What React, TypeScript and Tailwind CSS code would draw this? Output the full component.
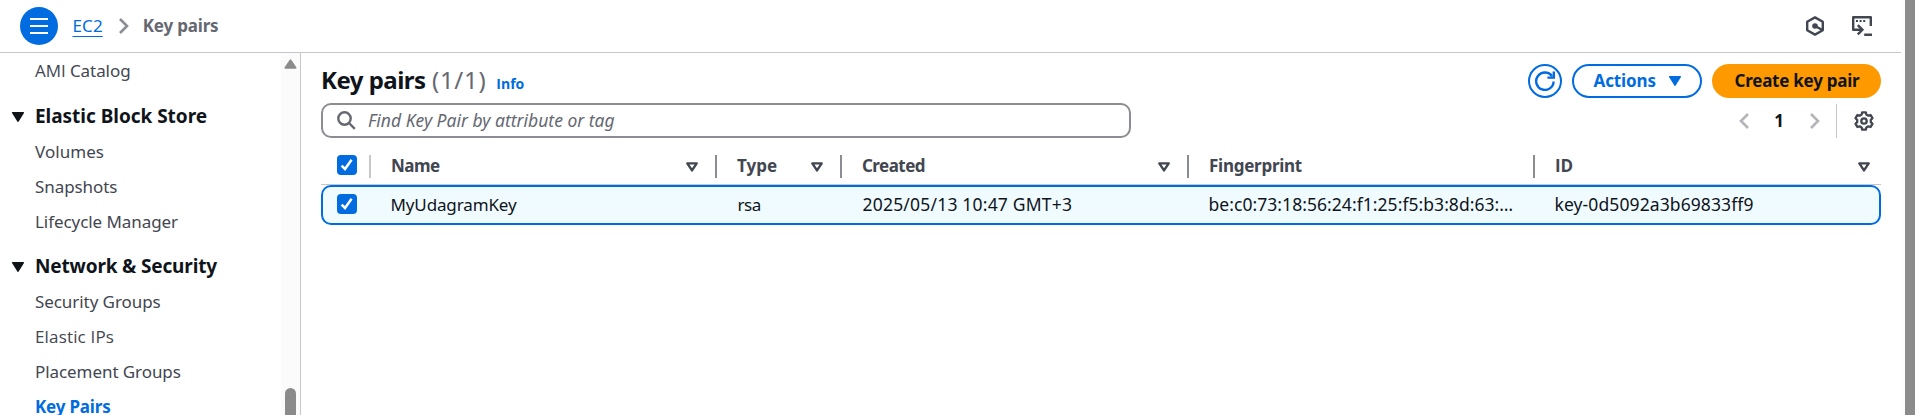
import type { ReactNode } from "react";

function Caret({ className = "" }: { className?: string }) {
  return (
    <svg className={`shrink-0 ${className}`} width="14" height="12" viewBox="0 0 14 12">
      <path d="M1.7 1.7h10.6L7 10.2z" fill="currentColor" stroke="currentColor" strokeWidth="1.6" strokeLinejoin="round" />
    </svg>
  );
}

function SortIcon() {
  return (
    <svg className="shrink-0" width="14" height="12" viewBox="0 0 14 12">
      <path d="M2.3 2.4h9.4L7 9.4z" fill="none" stroke="#424650" strokeWidth="2.4" strokeLinejoin="round" />
    </svg>
  );
}

function Chevron({ className, flip = false }: { className: string; flip?: boolean }) {
  return (
    <svg className={className} width="12" height="18" viewBox="0 0 12 18" fill="none" stroke="currentColor" strokeWidth="2.6">
      <path d={flip ? "M10 2 3 9l7 7" : "M2 2l7 7-7 7"} />
    </svg>
  );
}

function Checkbox() {
  return (
    <span className="flex size-5 shrink-0 items-center justify-center rounded-[4px] bg-[#006ce0]">
      <svg width="14" height="14" viewBox="0 0 14 14" fill="none" stroke="#fff" strokeWidth="2.5">
        <path d="M1.6 7.6 5 11l6.6-9.2" />
      </svg>
    </span>
  );
}

function Section({ children }: { children: ReactNode }) {
  return (
    <div className="flex h-[25px] items-center text-[19px] leading-[25px] font-bold text-[#0f141a]">
      <Caret className="mr-[10px]" />
      <span className="whitespace-nowrap">{children}</span>
    </div>
  );
}

function Item({ children, className = "tracking-[-0.07px]" }: { children: ReactNode; className?: string }) {
  return <div className={`ml-6 h-[25px] leading-[25px] whitespace-nowrap ${className}`}>{children}</div>;
}

function Sidebar() {
  return (
    <aside className="flex w-[301px] shrink-0 border-r border-[#c6c6cd]">
      <nav className="flex w-[281px] flex-col gap-[10px] pt-[5px] pl-[11px] text-[#424650]">
        <Item><span className="font-['Open_Sans',sans-serif]">AMI</span> Catalog</Item>
        <div className="mt-[11px]"><Section><span className="tracking-[-0.03px]">Elastic Block Store</span></Section></div>
        <Item className="tracking-[0.05px]">Volumes</Item>
        <Item>Snapshots</Item>
        <Item>Lifecycle Manager</Item>
        <div className="mt-[10px]"><Section><span className="tracking-[-0.16px]">Network &amp; Security</span></Section></div>
        <Item>Security Groups</Item>
        <Item className="font-['Open_Sans',sans-serif] tracking-[0.16px]">Elastic IPs</Item>
        <Item>Placement Groups</Item>
        <Item className="font-bold tracking-[-0.19px] text-[#006ce0]">Key Pairs</Item>
      </nav>
      <div className="flex w-[19px] flex-col items-center justify-between bg-[#fbfbfb] pt-[6px]">
        <svg width="13" height="10" viewBox="0 0 13 10">
          <path d="M6.5 1.2 11.6 8.8H1.4z" fill="#8b8b8b" stroke="#8b8b8b" strokeWidth="1.8" strokeLinejoin="round" />
        </svg>
        <div className="h-[27px] w-[11px] rounded-t-full bg-[#8b8b8b]" />
      </div>
    </aside>
  );
}

function TopBar() {
  return (
    <header className="flex h-[53px] shrink-0 items-center border-b border-[#c6c6cd] pl-5">
      <button className="flex size-[38px] items-center justify-center rounded-full bg-[#006ce0]">
        <svg width="18" height="16" viewBox="0 0 18 16" stroke="#fff" strokeWidth="2">
          <path d="M0 1h18M0 8h18M0 15h18" />
        </svg>
      </button>
      <a className="-mt-px ml-[14.5px] tracking-[0.1px] text-[#006ce0] underline decoration-1 underline-offset-[4px]">EC2</a>
      <Chevron className="ml-[15px] text-[#8c8c94]" />
      <span className="-mt-px ml-[13px] font-bold tracking-[-0.19px] text-[#656871]">Key pairs</span>
      <div className="mr-[29px] ml-auto flex gap-[27px] text-[#424650]">
        <svg width="20" height="20" viewBox="0 0 20 20" fill="none" stroke="currentColor" strokeWidth="2.4" strokeLinejoin="round">
          <path d="M10 1.4 17.8 5.7v8.6L10 18.6 2.2 14.3V5.7z" />
          <circle cx="10" cy="10" r="2.8" fill="currentColor" stroke="none" />
          <path d="M10 10l7 3.8" />
        </svg>
        <svg width="20" height="20" viewBox="0 0 20 20" fill="none" stroke="currentColor" strokeWidth="2.4">
          <path d="M18.8 10V1.2H1.2v12.6H10" strokeLinejoin="round" />
          <path d="M5.8 9.2l4.6 4.6-4.6 4.6M12.2 18.8H20" />
          <path d="M4 5h2M7.6 5h2M11.2 5h2" strokeWidth="2" />
        </svg>
      </div>
    </header>
  );
}

function HeadCell({ label, width, sort = true, labelClass = "" }: { label: string; width: string; sort?: boolean; labelClass?: string }) {
  return (
    <div className={`flex h-[23px] shrink-0 items-center justify-between border-l-2 border-[#8c8c94] pr-4 pl-5 ${width}`}>
      <span className={`-mt-[2px] ${labelClass}`}>{label}</span>
      {sort && <SortIcon />}
    </div>
  );
}

function Table() {
  return (
    <div className="mt-4 w-[1560px]">
      <div className="flex h-[31px] items-start border-b border-[#c6c6cd] pt-px pl-4 font-bold text-[#424650]">
        <Checkbox />
        <div className="ml-3 flex h-[23px] w-[346px] shrink-0 items-center justify-between border-l-2 border-[#c6c6cd] pr-[16px] pl-5">
          <span className="-mt-[2px] tracking-[-0.56px]">Name</span>
          <SortIcon />
        </div>
        <HeadCell label="Type" width="w-[125px]" />
        <HeadCell label="Created" width="w-[347px]" labelClass="tracking-[-0.54px]" />
        <HeadCell label="Fingerprint" width="w-[346px]" sort={false} labelClass="tracking-[-0.26px]" />
        <HeadCell label="ID" width="w-[354px]" labelClass="font-['Open_Sans',sans-serif] tracking-[-0.11px]" />
      </div>
      <div className="flex h-10 items-center rounded-[10px] border-2 border-[#006ce0] bg-[#f0fbff] pb-[2px] pl-[14px] text-[17.5px] whitespace-nowrap text-[#0f141a]">
        <Checkbox />
        <span className="ml-[33.5px] w-[347px] text-[17px] tracking-[-0.13px]">MyUdagramKey</span>
        <span className="w-[125px] text-[17px] tracking-[-0.4px]">rsa</span>
        <span className="w-[346px] tracking-[0.2px]">2025/05/13 10:47 GMT+3</span>
        <span className="w-[346px] tracking-[0.05px]">be:c0:73:18:56:24:f1:25:f5:b3:8d:63:…</span>
        <span className="tracking-[0.1px]">key-0d5092a3b69833ff9</span>
      </div>
    </div>
  );
}

function Main() {
  return (
    <main className="min-w-0 flex-1 pt-[11px] pl-5">
      <div className="flex h-[34px] w-[1560px] items-center">
        <div className="mt-px flex items-baseline text-[24px] leading-[32px]">
          <h1 className="font-bold tracking-[-0.52px] text-[#0f141a]">Key pairs</h1>
          <span className="ml-[6.5px] tracking-[0.7px] text-[#656871]">(1/1)</span>
          <a className="ml-[10px] font-['Open_Sans',sans-serif] text-[14px] font-bold text-[#006ce0]">Info</a>
        </div>
        <div className="ml-auto flex gap-[10px] font-bold">
          <button className="flex size-[34px] items-center justify-center rounded-full border-2 border-[#006ce0] text-[#006ce0]">
            <svg className="shrink-0" width="20" height="20" viewBox="0 0 20 20" fill="none" stroke="currentColor" strokeWidth="2.4">
              <path d="M18.6 10.4A8.7 8.7 0 1 1 17 5.2" />
              <path d="M18.8 0.4v6.2h-6.4" />
            </svg>
          </button>
          <button className="flex h-[34px] w-[130px] items-center rounded-full border-2 border-[#006ce0] pb-[2px] pl-[19.5px] text-[#006ce0]">
            <span className="tracking-[-0.1px]">Actions</span>
            <Caret className="mt-[2px] ml-[12px]" />
          </button>
          <button className="h-[34px] w-[169px] rounded-full bg-[#ff9900] pb-[2px] pl-px tracking-[-0.24px] text-[#0f141a]">Create key pair</button>
        </div>
      </div>
      <div className="mt-[5px] flex h-[35px] w-[1560px] items-center">
        <div className="flex h-[35px] w-[810px] items-center rounded-[10px] border-2 border-[#8c8c94] pl-[14px] text-[#656871]">
          <svg width="19" height="19" viewBox="0 0 19 19" fill="none" stroke="currentColor" strokeWidth="2.4">
            <circle cx="7.5" cy="7.5" r="6.2" />
            <path d="M12 12l5.8 5.8" />
          </svg>
          <span className="-mt-px ml-3 text-[17.5px] italic">Find Key Pair by attribute or tag</span>
        </div>
        <div className="ml-auto flex h-[34px] items-center">
          <Chevron flip className="text-[#b4b4bb]" />
          <span className="-mt-px ml-[24px] font-bold text-[#0f141a]">1</span>
          <Chevron className="ml-[25px] text-[#b4b4bb]" />
          <div className="ml-[15px] h-[34px] border-l border-[#c6c6cd]" />
          <svg className="mr-[7px] ml-[17px]" width="20" height="20" viewBox="0 0 20 20" fill="none" stroke="#424650" strokeWidth="2.3" strokeLinejoin="round">
            <path d="M8.2 1.3h3.6l.6 2.3 1.9 1.1 2.3-.7 1.9 3.200-1.700 1.700v2.200l1.700 1.700-1.900 3.200-2.300-.7-1.900 1.100-.6 2.300H8.200l-.6-2.300-1.900-1.100-2.300.7-1.900-3.200 1.700-1.700V8.900L1.500 7.200 3.400 4l2.300.7 1.900-1.100z" />
            <circle cx="10" cy="10" r="2.7" />
          </svg>
        </div>
      </div>
      <Table />
    </main>
  );
}

export default function App() {
  return (
    <div className="flex h-[415px] w-[1915px] overflow-hidden bg-white font-['Noto_Sans',sans-serif] text-[17px] leading-[23px]">
      <div className="flex w-[1901px] shrink-0 flex-col">
        <TopBar />
        <div className="flex min-h-0 flex-1">
          <Sidebar />
          <Main />
        </div>
      </div>
      <div className="w-1 bg-[#fcfcfc]" />
      <div className="w-[10px] bg-[#8b8b8b]" />
    </div>
  );
}
